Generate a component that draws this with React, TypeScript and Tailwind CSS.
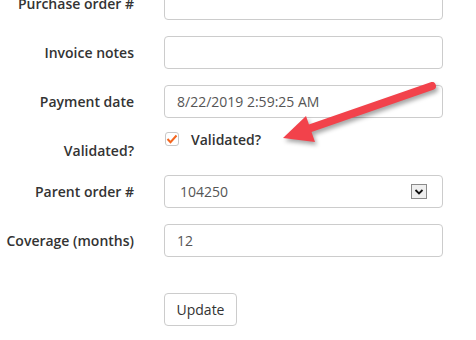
const labelCls =
  "w-[134px] shrink-0 text-right text-[14px] font-semibold leading-[20px] text-[#333]";
const inputCls =
  "ml-[30px] flex h-[33px] w-[279px] items-center rounded-[4px] border border-[#ccc] bg-white px-3 text-[14px] text-[#555]";

const Row = ({ label, value }: { label: string; value?: string }) => (
  <div className="mb-[16px] flex items-center">
    <div className={labelCls}>{label}</div>
    <div className={inputCls}>{value}</div>
  </div>
);

export default function App() {
  return (
    <div
      className="relative h-[340px] w-[476px] overflow-hidden bg-white"
      style={{ fontFamily: '"Open Sans", sans-serif' }}
    >
      <div className="mt-[-13px] flex flex-col">
        <Row label="Purchase order #" />
        <Row label="Invoice notes" />
        <Row label="Payment date" value="8/22/2019 2:59:25 AM" />

        {/* checkbox row */}
        <div className="mb-[16px] flex h-[25px] items-start">
          <div className={labelCls + " pt-[7px]"}>Validated?</div>
          <div className="ml-[31px] mt-[-5px] flex h-[20px] items-center gap-[12px]">
            <span className="flex h-[14px] w-[14px] items-center justify-center rounded-[3px] border border-[#c8c8c8] bg-white">
              <svg width="12" height="12" viewBox="0 0 12 12">
                <path
                  d="M1.5 6 L4.5 9.2 L10.5 2.5"
                  fill="none"
                  stroke="#f4661f"
                  strokeWidth="2"
                />
              </svg>
            </span>
            <span className="text-[14px] font-semibold text-[#333]">Validated?</span>
          </div>
        </div>

        {/* parent order select */}
        <div className="mb-[16px] flex items-center">
          <div className={labelCls}>Parent order #</div>
          <div className={inputCls + " justify-between pl-[15px] pr-[15px]"}>
            <span>104250</span>
            <span className="flex h-[15px] w-[16px] items-center justify-center border border-[#8a8a8a] bg-[#efefef]">
              <svg width="10" height="8" viewBox="0 0 10 8">
                <path d="M1.5 2 L5 5.5 L8.5 2" fill="none" stroke="#111" strokeWidth="1.8" />
              </svg>
            </span>
          </div>
        </div>

        <Row label="Coverage (months)" value="12" />

        <div className="ml-[164px] mt-[20px]">
          <button className="h-[33px] w-[73px] rounded-[4px] border border-[#ccc] bg-white text-[14px] text-[#333]">
            Update
          </button>
        </div>
      </div>

      {/* annotation arrow */}
      <svg
        className="pointer-events-none absolute left-0 top-0"
        width="476"
        height="340"
        viewBox="0 0 476 340"
        style={{ filter: "drop-shadow(2px 3px 2px rgba(0,0,0,0.35))" }}
      >
        <line x1="432" y1="86" x2="308" y2="129" stroke="#f2424b" strokeWidth="8" strokeLinecap="round" />
        <polygon points="283,138 306,116 315,142" fill="#f2424b" />
      </svg>
    </div>
  );
}
